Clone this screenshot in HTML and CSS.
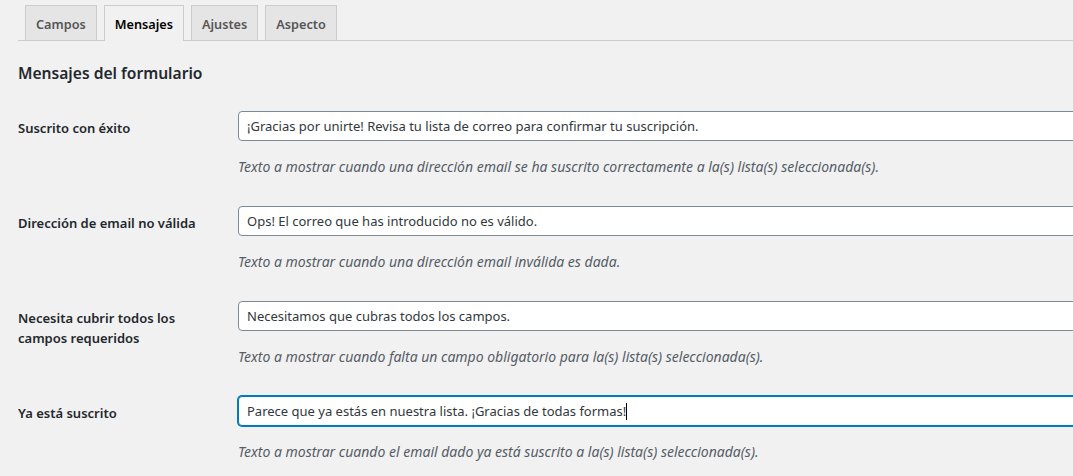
FILE: index.html
```html
<!DOCTYPE html>
<html lang="es">
<head>
<meta charset="utf-8">
<title>Mensajes</title>
<link rel="stylesheet" href="styles.css">
</head>
<body>
<div class="wrap">
  <nav class="tabs">
    <a class="tab">Campos</a>
    <a class="tab tab-active">Mensajes</a>
    <a class="tab">Ajustes</a>
    <a class="tab">Aspecto</a>
  </nav>
  <h2 class="title">Mensajes del formulario</h2>
  <div class="table-clip">
  <table class="form-table">
    <tr>
      <th>Suscrito con éxito</th>
      <td>
        <input class="field" type="text" value="¡Gracias por unirte! Revisa tu lista de correo para confirmar tu suscripción.">
        <p class="description">Texto a mostrar cuando una dirección email se ha suscrito correctamente a la(s) lista(s) seleccionada(s).</p>
      </td>
    </tr>
    <tr>
      <th>Dirección de email no válida</th>
      <td>
        <input class="field" type="text" value="Ops! El correo que has introducido no es válido.">
        <p class="description">Texto a mostrar cuando una dirección email inválida es dada.</p>
      </td>
    </tr>
    <tr>
      <th>Necesita cubrir todos los campos requeridos</th>
      <td>
        <input class="field" type="text" value="Necesitamos que cubras todos los campos.">
        <p class="description">Texto a mostrar cuando falta un campo obligatorio para la(s) lista(s) seleccionada(s).</p>
      </td>
    </tr>
    <tr>
      <th>Ya está suscrito</th>
      <td>
        <div class="field field-focus">Parece que ya estás en nuestra lista. ¡Gracias de todas formas!<span class="caret"></span></div>
        <p class="description">Texto a mostrar cuando el email dado ya está suscrito a la(s) lista(s) seleccionada(s).</p>
      </td>
    </tr>
  </table>
  </div>
</div>
</body>
</html>
```

FILE: styles.css
```css
html, body {
  margin: 0;
  padding: 0;
  overflow: hidden;
  background: #f1f1f1;
}
body {
  font-family: "Noto Sans", "Open Sans", sans-serif;
  font-size: 13px;
  color: #23282d;
}
.wrap {
  margin-left: 18px;
}
.tabs {
  display: flex;
  align-items: flex-end;
  padding-top: 5px;
  border-bottom: 1px solid #ccc;
  height: 35px;
}
.tab {
  display: block;
  margin-left: 7px;
  padding: 6px 10px 4px;
  height: 24px;
  line-height: 24px;
  border: 1px solid #ccc;
  border-bottom: none;
  background: #e5e5e5;
  color: #555;
  font-weight: 600;
  font-size: 12.7px;
}
.tab-active {
  background: #f1f1f1;
  color: #000;
  height: 25px;
  margin-bottom: -1px;
}
.title {
  margin: 20px 0 0;
  font-size: 15.6px;
  font-weight: 600;
  line-height: 24px;
  color: #23282d;
}
.table-clip {
  overflow: hidden;
  margin-top: 11px;
}
.form-table {
  border-collapse: collapse;
  width: 1120px;
}
.form-table th {
  width: 200px;
  padding: 22px 10px 18px 0;
  text-align: left;
  vertical-align: top;
  font-weight: 600;
  font-size: 13px;
  line-height: 20px;
}
.form-table td {
  padding: 15px 10px 14px;
  vertical-align: top;
}
.field {
  display: block;
  box-sizing: border-box;
  width: 100%;
  height: 30px;
  margin: 0;
  padding: 0 8px;
  border: 1px solid #7e8993;
  border-radius: 4px;
  background: #fff;
  font-family: inherit;
  font-size: 13px;
  line-height: 28px;
  color: #32373c;
}
.field-focus {
  border-color: #007cba;
  box-shadow: 0 0 0 1px #007cba;
}
.caret {
  display: inline-block;
  width: 1px;
  height: 17px;
  background: #000;
  vertical-align: -4px;
}
.description {
  margin: 16px 0 0;
  font-size: 14px;
  line-height: 20px;
  font-style: italic;
  color: #555d66;
}
```
